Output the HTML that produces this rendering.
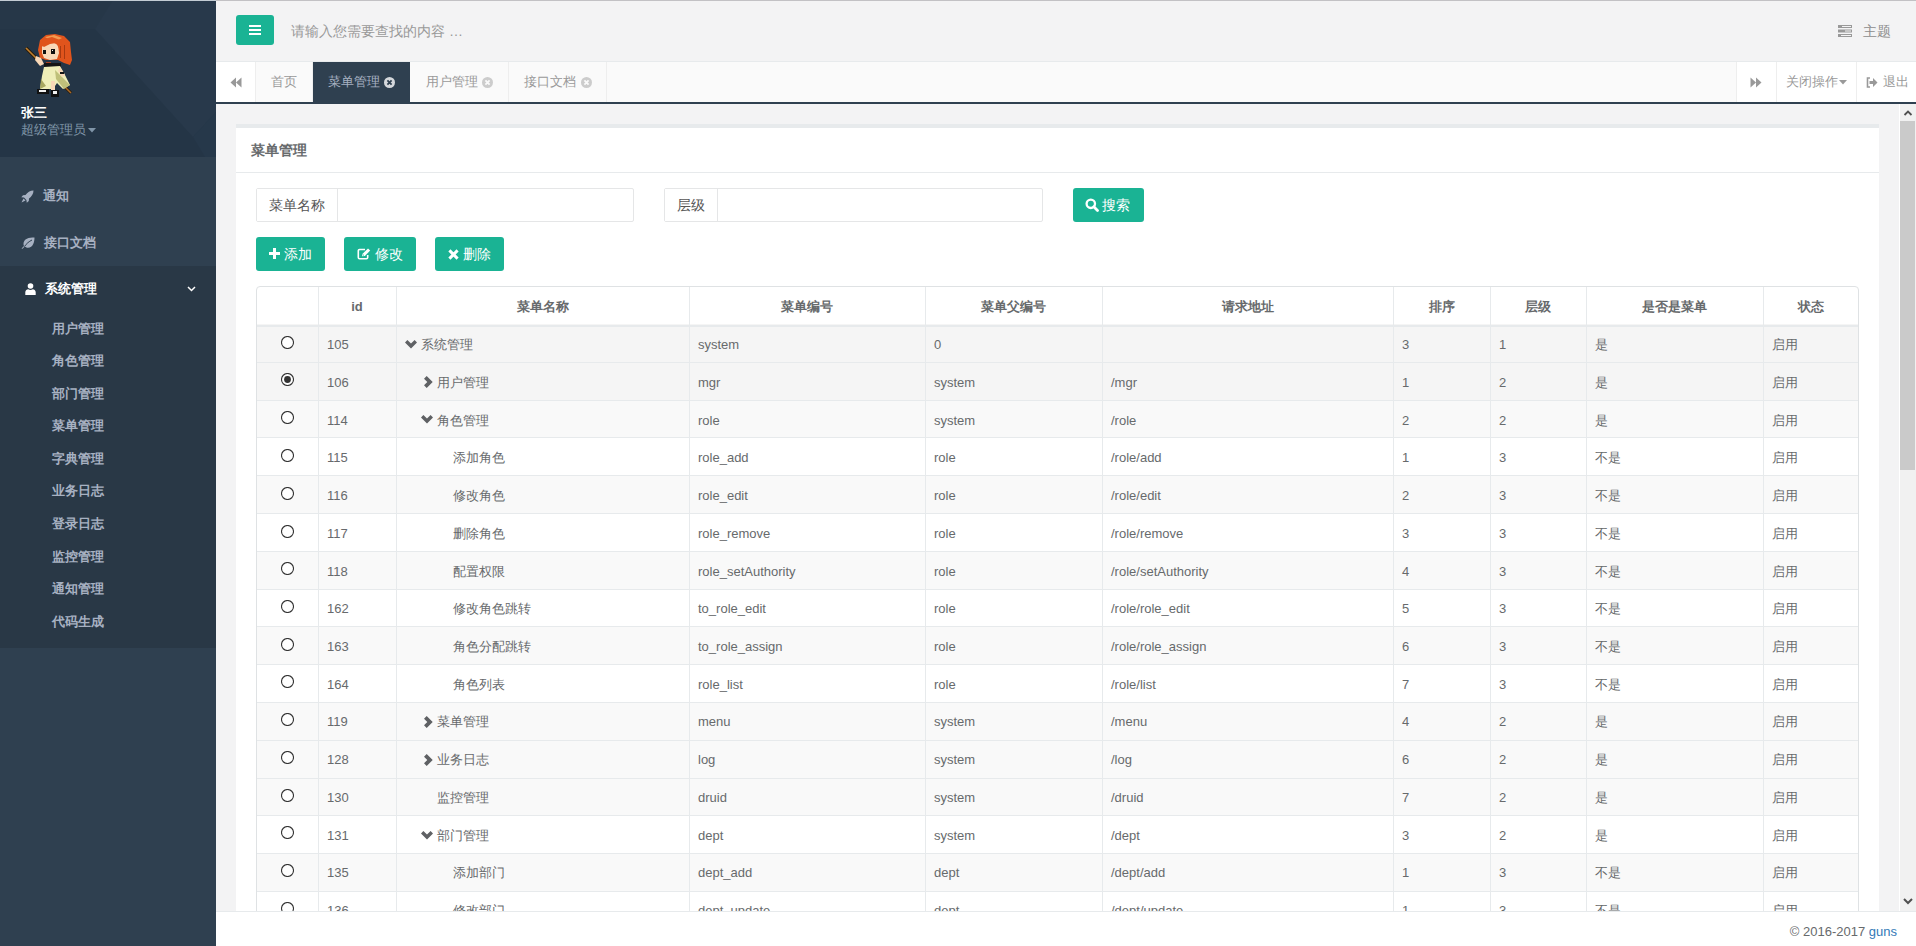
<!DOCTYPE html>
<html><head><meta charset="utf-8">
<style>
html,body{margin:0;padding:0;}
body{width:1916px;height:946px;overflow:hidden;position:relative;background:#f3f3f4;font-family:"Liberation Sans",sans-serif;font-size:13px;color:#676a6c;}
.abs{position:absolute;}
.ic{position:absolute;display:block;}
/* sidebar */
#side{position:absolute;left:0;top:0;width:216px;height:946px;background:#2f4050;overflow:hidden;}
#prof{position:absolute;left:0;top:0;width:216px;height:157px;background:#253444;overflow:hidden;}
.nm{position:absolute;left:21px;white-space:nowrap;line-height:18px;}
.nav1{position:absolute;left:0;width:216px;height:46.57px;line-height:46.57px;color:#a7b1c2;font-weight:bold;white-space:nowrap;}
.nav1 span{position:absolute;left:43px;top:0;}
#act{position:absolute;left:0;top:266px;width:216px;height:382px;background:#293846;}
.sub{position:absolute;left:52px;height:32.57px;line-height:32.57px;color:#a7b1c2;font-weight:bold;white-space:nowrap;}
/* header */
#topline{position:absolute;left:0;top:0;width:1916px;height:1px;background:#c2c1c4;}
#hdr{position:absolute;left:216px;top:1px;width:1700px;height:60px;background:#f3f3f4;}
#tabs{position:absolute;left:216px;top:61px;width:1700px;height:40px;background:#fafafa;border-top:1px solid #e7eaec;border-bottom:2px solid #2f4050;}
.tab{position:absolute;top:0;height:40px;line-height:40px;color:#999;white-space:nowrap;border-right:1px solid #eee;box-sizing:border-box;}
.rn{position:absolute;top:0;height:40px;background:#fff;box-sizing:border-box;}
/* content */
#ibox{position:absolute;left:236px;top:124px;width:1643px;height:800px;background:#fff;border-top:4px solid #e7eaec;box-sizing:border-box;}
.ig{position:absolute;top:188px;height:34px;box-sizing:border-box;border:1px solid #e5e6e7;border-radius:2px;background:#fff;}
.ig .ad{position:absolute;left:0;top:0;height:32px;line-height:32px;border-right:1px solid #e5e6e7;text-align:center;font-size:14px;color:#555;background:#fff;}
.btn{position:absolute;height:34px;line-height:34px;background:#1ab394;border-radius:3px;color:#fff;font-size:14px;white-space:nowrap;box-sizing:border-box;}
.tbl{position:absolute;border:1px solid #dfe2e4;border-radius:4px;background:#fff;}
.th{position:absolute;height:38px;line-height:40px;text-align:center;font-weight:bold;color:#676a6c;white-space:nowrap;}
.tr{position:absolute;left:257px;width:1601px;}
.td{position:absolute;height:36.74px;line-height:36.74px;white-space:nowrap;color:#676a6c;}
.vl{position:absolute;width:1px;background:#e7eaec;}
.hl{position:absolute;left:257px;width:1601px;height:1px;background:#e7eaec;}
.hl2{position:absolute;left:257px;width:1601px;height:2px;background:#e7eaec;}
.radio{position:absolute;left:281px;width:11px;height:11px;border:1px solid #333;border-radius:50%;background:#fff;}
.radio.on::after{content:"";position:absolute;left:2.5px;top:2.5px;width:6px;height:6px;border-radius:50%;background:#333;}
#footer{position:absolute;left:216px;top:911px;width:1700px;height:35px;background:#fff;border-top:1px solid #e7eaec;box-sizing:border-box;}
#sb{position:absolute;left:1899px;top:104px;width:17px;height:807px;background:#f1f1f1;border-left:1px solid #fff;box-sizing:border-box;}
#thumb{position:absolute;left:0;top:17px;width:15px;height:349px;background:#cacaca;}
</style></head><body>

<!-- content area -->
<div id="ibox">
  <div class="abs" style="left:15px;top:13px;font-weight:bold;font-size:14px;color:#676a6c;line-height:18px;">菜单管理</div>
  <div class="abs" style="left:0;top:44px;width:1643px;height:1px;background:#e7eaec;"></div>
</div>

<div class="ig" style="left:256px;width:378px;">
  <div class="ad" style="width:80px;">菜单名称</div>
</div>
<div class="ig" style="left:664px;width:379px;">
  <div class="ad" style="width:52px;">层级</div>
</div>
<div class="btn" style="left:1073px;top:188px;width:71px;">
  <svg class="ic" style="left:12px;top:10px" width="14" height="14" viewBox="0 0 14 14"><circle cx="5.8" cy="5.8" r="4.2" fill="none" stroke="#fff" stroke-width="2.3"/><path d="M8.8 8.8 L12.5 12.5" stroke="#fff" stroke-width="2.8" stroke-linecap="round"/></svg>
  <span class="abs" style="left:29px;top:0;">搜索</span>
</div>
<div class="btn" style="left:256px;top:237px;width:69px;">
  <svg class="ic" style="left:13px;top:11px" width="11" height="11" viewBox="0 0 11 11"><path d="M5.5 0V11M0 5.5H11" stroke="#fff" stroke-width="3"/></svg>
  <span class="abs" style="left:28px;top:0;">添加</span>
</div>
<div class="btn" style="left:344px;top:237px;width:72px;">
  <svg class="ic" style="left:13px;top:11px" width="14" height="12" viewBox="0 0 14 12"><path d="M8 1.5H2.5a1.2 1.2 0 0 0-1.2 1.2v6.8a1.2 1.2 0 0 0 1.2 1.2h7a1.2 1.2 0 0 0 1.2-1.2V7" fill="none" stroke="#fff" stroke-width="1.6"/><path d="M5 8.2L5.6 5.8 11 0.4 13.2 2.6 7.8 8z" fill="#fff"/><path d="M6 7.2l1 -0.2" stroke="#1ab394" stroke-width="0.8"/></svg>
  <span class="abs" style="left:31px;top:0;">修改</span>
</div>
<div class="btn" style="left:435px;top:237px;width:69px;">
  <svg class="ic" style="left:13px;top:12px" width="11" height="11" viewBox="0 0 11 11"><path d="M1.4 1.4L9.6 9.6M9.6 1.4L1.4 9.6" stroke="#fff" stroke-width="3"/></svg>
  <span class="abs" style="left:28px;top:0;">删除</span>
</div>

<div class="tbl" style="left:256px;top:286px;width:1601px;height:635px"></div>
<div class="th" style="left:318px;width:78px;top:287px">id</div>
<div class="th" style="left:396px;width:293px;top:287px">菜单名称</div>
<div class="th" style="left:689px;width:236px;top:287px">菜单编号</div>
<div class="th" style="left:925px;width:177px;top:287px">菜单父编号</div>
<div class="th" style="left:1102px;width:291px;top:287px">请求地址</div>
<div class="th" style="left:1393px;width:97px;top:287px">排序</div>
<div class="th" style="left:1490px;width:96px;top:287px">层级</div>
<div class="th" style="left:1586px;width:177px;top:287px">是否是菜单</div>
<div class="th" style="left:1763px;width:95px;top:287px">状态</div>
<div class="tr" style="top:324.10px;height:37.79px;background:#f5f5f5"></div>
<svg class="ic" style="left:281px;top:336px" width="13" height="13" viewBox="0 0 13 13"><circle cx="6.5" cy="6.5" r="6" fill="#fff" stroke="#333" stroke-width="1.1"/></svg>
<div class="td" style="left:327px;top:327.30px">105</div>
<svg class="ic" style="left:404.8px;top:339.5px" width="12" height="9" viewBox="0 0 12 9"><path d="M0 2.4 L2.4 0 L6 3.6 L9.6 0 L12 2.4 L6 8.4z" fill="#5f6164"/></svg>
<div class="td" style="left:421px;top:327.30px">系统管理</div>
<div class="td" style="left:698px;top:327.30px">system</div>
<div class="td" style="left:934px;top:327.30px">0</div>
<div class="td" style="left:1111px;top:327.30px"></div>
<div class="td" style="left:1402px;top:327.30px">3</div>
<div class="td" style="left:1499px;top:327.30px">1</div>
<div class="td" style="left:1595px;top:327.30px">是</div>
<div class="td" style="left:1772px;top:327.30px">启用</div>
<div class="tr" style="top:361.89px;height:37.79px;background:#f5f5f5"></div>
<svg class="ic" style="left:281px;top:373px" width="13" height="13" viewBox="0 0 13 13"><circle cx="6.5" cy="6.5" r="6" fill="#fff" stroke="#333" stroke-width="1.1"/><circle cx="6.5" cy="6.5" r="3.4" fill="#333"/></svg>
<div class="td" style="left:327px;top:365.01px">106</div>
<svg class="ic" style="left:424px;top:375.68600000000004px" width="9" height="12" viewBox="0 0 9 12"><path d="M2.7 0 L0 2.7 L3.3 6 L0 9.3 L2.7 12 L8.7 6z" fill="#5f6164"/></svg>
<div class="td" style="left:437px;top:365.01px">用户管理</div>
<div class="td" style="left:698px;top:365.01px">mgr</div>
<div class="td" style="left:934px;top:365.01px">system</div>
<div class="td" style="left:1111px;top:365.01px">/mgr</div>
<div class="td" style="left:1402px;top:365.01px">1</div>
<div class="td" style="left:1499px;top:365.01px">2</div>
<div class="td" style="left:1595px;top:365.01px">是</div>
<div class="td" style="left:1772px;top:365.01px">启用</div>
<div class="tr" style="top:399.67px;height:37.79px;background:#f9f9f9"></div>
<svg class="ic" style="left:281px;top:411px" width="13" height="13" viewBox="0 0 13 13"><circle cx="6.5" cy="6.5" r="6" fill="#fff" stroke="#333" stroke-width="1.1"/></svg>
<div class="td" style="left:327px;top:402.72px">114</div>
<svg class="ic" style="left:420.8px;top:415.072px" width="12" height="9" viewBox="0 0 12 9"><path d="M0 2.4 L2.4 0 L6 3.6 L9.6 0 L12 2.4 L6 8.4z" fill="#5f6164"/></svg>
<div class="td" style="left:437px;top:402.72px">角色管理</div>
<div class="td" style="left:698px;top:402.72px">role</div>
<div class="td" style="left:934px;top:402.72px">system</div>
<div class="td" style="left:1111px;top:402.72px">/role</div>
<div class="td" style="left:1402px;top:402.72px">2</div>
<div class="td" style="left:1499px;top:402.72px">2</div>
<div class="td" style="left:1595px;top:402.72px">是</div>
<div class="td" style="left:1772px;top:402.72px">启用</div>
<div class="tr" style="top:437.46px;height:37.79px;background:#fff"></div>
<svg class="ic" style="left:281px;top:449px" width="13" height="13" viewBox="0 0 13 13"><circle cx="6.5" cy="6.5" r="6" fill="#fff" stroke="#333" stroke-width="1.1"/></svg>
<div class="td" style="left:327px;top:440.43px">115</div>
<div class="td" style="left:453px;top:440.43px">添加角色</div>
<div class="td" style="left:698px;top:440.43px">role_add</div>
<div class="td" style="left:934px;top:440.43px">role</div>
<div class="td" style="left:1111px;top:440.43px">/role/add</div>
<div class="td" style="left:1402px;top:440.43px">1</div>
<div class="td" style="left:1499px;top:440.43px">3</div>
<div class="td" style="left:1595px;top:440.43px">不是</div>
<div class="td" style="left:1772px;top:440.43px">启用</div>
<div class="tr" style="top:475.24px;height:37.79px;background:#f9f9f9"></div>
<svg class="ic" style="left:281px;top:487px" width="13" height="13" viewBox="0 0 13 13"><circle cx="6.5" cy="6.5" r="6" fill="#fff" stroke="#333" stroke-width="1.1"/></svg>
<div class="td" style="left:327px;top:478.14px">116</div>
<div class="td" style="left:453px;top:478.14px">修改角色</div>
<div class="td" style="left:698px;top:478.14px">role_edit</div>
<div class="td" style="left:934px;top:478.14px">role</div>
<div class="td" style="left:1111px;top:478.14px">/role/edit</div>
<div class="td" style="left:1402px;top:478.14px">2</div>
<div class="td" style="left:1499px;top:478.14px">3</div>
<div class="td" style="left:1595px;top:478.14px">不是</div>
<div class="td" style="left:1772px;top:478.14px">启用</div>
<div class="tr" style="top:513.03px;height:37.79px;background:#fff"></div>
<svg class="ic" style="left:281px;top:525px" width="13" height="13" viewBox="0 0 13 13"><circle cx="6.5" cy="6.5" r="6" fill="#fff" stroke="#333" stroke-width="1.1"/></svg>
<div class="td" style="left:327px;top:515.85px">117</div>
<div class="td" style="left:453px;top:515.85px">删除角色</div>
<div class="td" style="left:698px;top:515.85px">role_remove</div>
<div class="td" style="left:934px;top:515.85px">role</div>
<div class="td" style="left:1111px;top:515.85px">/role/remove</div>
<div class="td" style="left:1402px;top:515.85px">3</div>
<div class="td" style="left:1499px;top:515.85px">3</div>
<div class="td" style="left:1595px;top:515.85px">不是</div>
<div class="td" style="left:1772px;top:515.85px">启用</div>
<div class="tr" style="top:550.82px;height:37.79px;background:#f9f9f9"></div>
<svg class="ic" style="left:281px;top:562px" width="13" height="13" viewBox="0 0 13 13"><circle cx="6.5" cy="6.5" r="6" fill="#fff" stroke="#333" stroke-width="1.1"/></svg>
<div class="td" style="left:327px;top:553.56px">118</div>
<div class="td" style="left:453px;top:553.56px">配置权限</div>
<div class="td" style="left:698px;top:553.56px">role_setAuthority</div>
<div class="td" style="left:934px;top:553.56px">role</div>
<div class="td" style="left:1111px;top:553.56px">/role/setAuthority</div>
<div class="td" style="left:1402px;top:553.56px">4</div>
<div class="td" style="left:1499px;top:553.56px">3</div>
<div class="td" style="left:1595px;top:553.56px">不是</div>
<div class="td" style="left:1772px;top:553.56px">启用</div>
<div class="tr" style="top:588.60px;height:37.79px;background:#fff"></div>
<svg class="ic" style="left:281px;top:600px" width="13" height="13" viewBox="0 0 13 13"><circle cx="6.5" cy="6.5" r="6" fill="#fff" stroke="#333" stroke-width="1.1"/></svg>
<div class="td" style="left:327px;top:591.27px">162</div>
<div class="td" style="left:453px;top:591.27px">修改角色跳转</div>
<div class="td" style="left:698px;top:591.27px">to_role_edit</div>
<div class="td" style="left:934px;top:591.27px">role</div>
<div class="td" style="left:1111px;top:591.27px">/role/role_edit</div>
<div class="td" style="left:1402px;top:591.27px">5</div>
<div class="td" style="left:1499px;top:591.27px">3</div>
<div class="td" style="left:1595px;top:591.27px">不是</div>
<div class="td" style="left:1772px;top:591.27px">启用</div>
<div class="tr" style="top:626.39px;height:37.79px;background:#f9f9f9"></div>
<svg class="ic" style="left:281px;top:638px" width="13" height="13" viewBox="0 0 13 13"><circle cx="6.5" cy="6.5" r="6" fill="#fff" stroke="#333" stroke-width="1.1"/></svg>
<div class="td" style="left:327px;top:628.98px">163</div>
<div class="td" style="left:453px;top:628.98px">角色分配跳转</div>
<div class="td" style="left:698px;top:628.98px">to_role_assign</div>
<div class="td" style="left:934px;top:628.98px">role</div>
<div class="td" style="left:1111px;top:628.98px">/role/role_assign</div>
<div class="td" style="left:1402px;top:628.98px">6</div>
<div class="td" style="left:1499px;top:628.98px">3</div>
<div class="td" style="left:1595px;top:628.98px">不是</div>
<div class="td" style="left:1772px;top:628.98px">启用</div>
<div class="tr" style="top:664.17px;height:37.79px;background:#fff"></div>
<svg class="ic" style="left:281px;top:675px" width="13" height="13" viewBox="0 0 13 13"><circle cx="6.5" cy="6.5" r="6" fill="#fff" stroke="#333" stroke-width="1.1"/></svg>
<div class="td" style="left:327px;top:666.69px">164</div>
<div class="td" style="left:453px;top:666.69px">角色列表</div>
<div class="td" style="left:698px;top:666.69px">role_list</div>
<div class="td" style="left:934px;top:666.69px">role</div>
<div class="td" style="left:1111px;top:666.69px">/role/list</div>
<div class="td" style="left:1402px;top:666.69px">7</div>
<div class="td" style="left:1499px;top:666.69px">3</div>
<div class="td" style="left:1595px;top:666.69px">不是</div>
<div class="td" style="left:1772px;top:666.69px">启用</div>
<div class="tr" style="top:701.96px;height:37.79px;background:#f9f9f9"></div>
<svg class="ic" style="left:281px;top:713px" width="13" height="13" viewBox="0 0 13 13"><circle cx="6.5" cy="6.5" r="6" fill="#fff" stroke="#333" stroke-width="1.1"/></svg>
<div class="td" style="left:327px;top:704.40px">119</div>
<svg class="ic" style="left:424px;top:715.76px" width="9" height="12" viewBox="0 0 9 12"><path d="M2.7 0 L0 2.7 L3.3 6 L0 9.3 L2.7 12 L8.7 6z" fill="#5f6164"/></svg>
<div class="td" style="left:437px;top:704.40px">菜单管理</div>
<div class="td" style="left:698px;top:704.40px">menu</div>
<div class="td" style="left:934px;top:704.40px">system</div>
<div class="td" style="left:1111px;top:704.40px">/menu</div>
<div class="td" style="left:1402px;top:704.40px">4</div>
<div class="td" style="left:1499px;top:704.40px">2</div>
<div class="td" style="left:1595px;top:704.40px">是</div>
<div class="td" style="left:1772px;top:704.40px">启用</div>
<div class="tr" style="top:739.75px;height:37.79px;background:#f9f9f9"></div>
<svg class="ic" style="left:281px;top:751px" width="13" height="13" viewBox="0 0 13 13"><circle cx="6.5" cy="6.5" r="6" fill="#fff" stroke="#333" stroke-width="1.1"/></svg>
<div class="td" style="left:327px;top:742.11px">128</div>
<svg class="ic" style="left:424px;top:753.546px" width="9" height="12" viewBox="0 0 9 12"><path d="M2.7 0 L0 2.7 L3.3 6 L0 9.3 L2.7 12 L8.7 6z" fill="#5f6164"/></svg>
<div class="td" style="left:437px;top:742.11px">业务日志</div>
<div class="td" style="left:698px;top:742.11px">log</div>
<div class="td" style="left:934px;top:742.11px">system</div>
<div class="td" style="left:1111px;top:742.11px">/log</div>
<div class="td" style="left:1402px;top:742.11px">6</div>
<div class="td" style="left:1499px;top:742.11px">2</div>
<div class="td" style="left:1595px;top:742.11px">是</div>
<div class="td" style="left:1772px;top:742.11px">启用</div>
<div class="tr" style="top:777.53px;height:37.79px;background:#f9f9f9"></div>
<svg class="ic" style="left:281px;top:789px" width="13" height="13" viewBox="0 0 13 13"><circle cx="6.5" cy="6.5" r="6" fill="#fff" stroke="#333" stroke-width="1.1"/></svg>
<div class="td" style="left:327px;top:779.82px">130</div>
<div class="td" style="left:437px;top:779.82px">监控管理</div>
<div class="td" style="left:698px;top:779.82px">druid</div>
<div class="td" style="left:934px;top:779.82px">system</div>
<div class="td" style="left:1111px;top:779.82px">/druid</div>
<div class="td" style="left:1402px;top:779.82px">7</div>
<div class="td" style="left:1499px;top:779.82px">2</div>
<div class="td" style="left:1595px;top:779.82px">是</div>
<div class="td" style="left:1772px;top:779.82px">启用</div>
<div class="tr" style="top:815.32px;height:37.79px;background:#fff"></div>
<svg class="ic" style="left:281px;top:826px" width="13" height="13" viewBox="0 0 13 13"><circle cx="6.5" cy="6.5" r="6" fill="#fff" stroke="#333" stroke-width="1.1"/></svg>
<div class="td" style="left:327px;top:817.53px">131</div>
<svg class="ic" style="left:420.8px;top:830.718px" width="12" height="9" viewBox="0 0 12 9"><path d="M0 2.4 L2.4 0 L6 3.6 L9.6 0 L12 2.4 L6 8.4z" fill="#5f6164"/></svg>
<div class="td" style="left:437px;top:817.53px">部门管理</div>
<div class="td" style="left:698px;top:817.53px">dept</div>
<div class="td" style="left:934px;top:817.53px">system</div>
<div class="td" style="left:1111px;top:817.53px">/dept</div>
<div class="td" style="left:1402px;top:817.53px">3</div>
<div class="td" style="left:1499px;top:817.53px">2</div>
<div class="td" style="left:1595px;top:817.53px">是</div>
<div class="td" style="left:1772px;top:817.53px">启用</div>
<div class="tr" style="top:853.10px;height:37.79px;background:#f9f9f9"></div>
<svg class="ic" style="left:281px;top:864px" width="13" height="13" viewBox="0 0 13 13"><circle cx="6.5" cy="6.5" r="6" fill="#fff" stroke="#333" stroke-width="1.1"/></svg>
<div class="td" style="left:327px;top:855.24px">135</div>
<div class="td" style="left:453px;top:855.24px">添加部门</div>
<div class="td" style="left:698px;top:855.24px">dept_add</div>
<div class="td" style="left:934px;top:855.24px">dept</div>
<div class="td" style="left:1111px;top:855.24px">/dept/add</div>
<div class="td" style="left:1402px;top:855.24px">1</div>
<div class="td" style="left:1499px;top:855.24px">3</div>
<div class="td" style="left:1595px;top:855.24px">不是</div>
<div class="td" style="left:1772px;top:855.24px">启用</div>
<div class="tr" style="top:890.89px;height:37.79px;background:#fff"></div>
<svg class="ic" style="left:281px;top:902px" width="13" height="13" viewBox="0 0 13 13"><circle cx="6.5" cy="6.5" r="6" fill="#fff" stroke="#333" stroke-width="1.1"/></svg>
<div class="td" style="left:327px;top:892.95px">136</div>
<div class="td" style="left:453px;top:892.95px">修改部门</div>
<div class="td" style="left:698px;top:892.95px">dept_update</div>
<div class="td" style="left:934px;top:892.95px">dept</div>
<div class="td" style="left:1111px;top:892.95px">/dept/update</div>
<div class="td" style="left:1402px;top:892.95px">1</div>
<div class="td" style="left:1499px;top:892.95px">3</div>
<div class="td" style="left:1595px;top:892.95px">不是</div>
<div class="td" style="left:1772px;top:892.95px">启用</div>
<div class="vl" style="left:318px;top:287px;height:625px"></div>
<div class="vl" style="left:396px;top:287px;height:625px"></div>
<div class="vl" style="left:689px;top:287px;height:625px"></div>
<div class="vl" style="left:925px;top:287px;height:625px"></div>
<div class="vl" style="left:1102px;top:287px;height:625px"></div>
<div class="vl" style="left:1393px;top:287px;height:625px"></div>
<div class="vl" style="left:1490px;top:287px;height:625px"></div>
<div class="vl" style="left:1586px;top:287px;height:625px"></div>
<div class="vl" style="left:1763px;top:287px;height:625px"></div>
<div class="hl2" style="top:325.4px"></div>
<div class="hl" style="top:361.89px"></div>
<div class="hl" style="top:399.67px"></div>
<div class="hl" style="top:437.46px"></div>
<div class="hl" style="top:475.24px"></div>
<div class="hl" style="top:513.03px"></div>
<div class="hl" style="top:550.82px"></div>
<div class="hl" style="top:588.60px"></div>
<div class="hl" style="top:626.39px"></div>
<div class="hl" style="top:664.17px"></div>
<div class="hl" style="top:701.96px"></div>
<div class="hl" style="top:739.75px"></div>
<div class="hl" style="top:777.53px"></div>
<div class="hl" style="top:815.32px"></div>
<div class="hl" style="top:853.10px"></div>
<div class="hl" style="top:890.89px"></div>

<div id="sb">
  <svg class="ic" style="left:3px;top:5px" width="10" height="8" viewBox="0 0 10 8"><path d="M1.5 6L5 2.5 8.5 6" fill="none" stroke="#505050" stroke-width="1.8"/></svg>
  <div id="thumb"></div>
  <svg class="ic" style="left:3px;top:793px" width="10" height="8" viewBox="0 0 10 8"><path d="M1 2L5 6 9 2" fill="none" stroke="#505050" stroke-width="2"/></svg>
</div>

<div id="footer">
  <div class="abs" style="right:19px;top:0;line-height:39px;white-space:nowrap;color:#676a6c;">© 2016-2017 <span style="color:#337ab7">guns</span></div>
</div>

<!-- header -->
<div id="hdr">
  <div class="abs" style="left:20px;top:14px;width:38px;height:30px;background:#1ab394;border-radius:3px;">
    <svg class="ic" style="left:13px;top:10px" width="12" height="10" viewBox="0 0 12 10"><rect x="0" y="0" width="12" height="2" fill="#fff"/><rect x="0" y="4" width="12" height="2" fill="#fff"/><rect x="0" y="8" width="12" height="2" fill="#fff"/></svg>
  </div>
  <div class="abs" style="left:75px;top:20px;line-height:20px;font-size:14px;color:#999;white-space:nowrap;">请输入您需要查找的内容 …</div>
  <svg class="ic" style="left:1622px;top:24px" width="14" height="12" viewBox="0 0 14 12"><rect x="0" y="0" width="14" height="3" fill="#999"/><rect x="0" y="4.5" width="14" height="3" fill="#999"/><rect x="0" y="9" width="14" height="3" fill="#999"/><rect x="4" y="1" width="9" height="1" fill="#f3f3f4"/><rect x="7" y="5.5" width="6" height="1" fill="#f3f3f4"/><rect x="3" y="10" width="10" height="1" fill="#f3f3f4"/></svg>
  <div class="abs" style="left:1647px;top:20.3px;line-height:20px;font-size:14px;color:#8c8c8c;white-space:nowrap;">主题</div>
</div>

<div id="tabs">
  <div class="rn" style="left:0;width:40px;border-right:1px solid #eee;">
    <svg class="ic" style="left:14px;top:15px" width="12" height="11" viewBox="0 0 12 11"><path d="M6 0.5V10.5L0.5 5.5z M11.5 0.5V10.5L6 5.5z" fill="#999"/></svg>
  </div>
  <div class="tab" style="left:40px;width:57px;padding-left:15px;">首页</div>
  <div class="tab" style="left:97px;width:97px;padding-left:15px;background:#2f4050;color:#a7b1c2;height:42px;border-right:none;">菜单管理<svg class="ic" style="left:71px;top:15px" width="11" height="11" viewBox="0 0 11 11"><circle cx="5.5" cy="5.5" r="5.5" fill="#d5d8dc"/><path d="M3.4 3.4L7.6 7.6M7.6 3.4L3.4 7.6" stroke="#2f4050" stroke-width="1.8"/></svg></div>
  <div class="tab" style="left:194px;width:99px;padding-left:16px;">用户管理<svg class="ic" style="left:72px;top:15px" width="11" height="11" viewBox="0 0 11 11"><circle cx="5.5" cy="5.5" r="5.5" fill="#ccc"/><path d="M3.4 3.4L7.6 7.6M7.6 3.4L3.4 7.6" stroke="#fafafa" stroke-width="1.8"/></svg></div>
  <div class="tab" style="left:293px;width:98px;padding-left:15px;">接口文档<svg class="ic" style="left:72px;top:15px" width="11" height="11" viewBox="0 0 11 11"><circle cx="5.5" cy="5.5" r="5.5" fill="#ccc"/><path d="M3.4 3.4L7.6 7.6M7.6 3.4L3.4 7.6" stroke="#fafafa" stroke-width="1.8"/></svg></div>
  <div class="rn" style="left:1520px;width:40px;border-left:1px solid #eee;">
    <svg class="ic" style="left:13px;top:15px" width="12" height="11" viewBox="0 0 12 11"><path d="M0.5 0.5V10.5L6 5.5z M6 0.5V10.5L11.5 5.5z" fill="#999"/></svg>
  </div>
  <div class="rn" style="left:1560px;width:80px;border-left:1px solid #eee;color:#999;line-height:40px;white-space:nowrap;">
    <span class="abs" style="left:9px;top:0;">关闭操作</span>
    <svg class="ic" style="left:62px;top:18px" width="8" height="5" viewBox="0 0 8 5"><path d="M0 0H8L4 4.5z" fill="#999"/></svg>
  </div>
  <div class="rn" style="left:1640px;width:60px;border-left:1px solid #eee;color:#999;line-height:40px;white-space:nowrap;">
    <svg class="ic" style="left:9px;top:15px" width="12" height="11" viewBox="0 0 12 11"><path d="M4 1H1.5V10H4" fill="none" stroke="#999" stroke-width="1.6"/><path d="M3.5 4H7V1L11.5 5.5 7 10V7H3.5z" fill="#999"/></svg>
    <span class="abs" style="left:26px;top:0;">退出</span>
  </div>
</div>

<!-- sidebar -->
<div id="side">
  <div id="prof">
    <svg class="ic" style="left:0;top:0" width="216" height="157" viewBox="0 0 216 157">
      <rect x="0" y="0" width="216" height="157" fill="#243546"/>
      <polygon points="0,0 216,0 216,112 193,137 95,29 0,29" fill="#28394b"/>
      <polygon points="0,0 113,0 95,29 0,29" fill="#263748"/>
      <polygon points="193,137 216,112 216,157 205,157" fill="#26384a"/>
    </svg>
    <svg class="ic" style="left:0;top:0" width="100" height="110" viewBox="0 0 100 110">
      <path d="M26 48 L41 63" stroke="#2a1a08" stroke-width="3.2"/>
      <path d="M26 48 L41 63" stroke="#c08030" stroke-width="1.6"/>
      <path d="M60 82 L71 93" stroke="#2a1a08" stroke-width="3"/>
      <path d="M60 82 L71 93" stroke="#a86a28" stroke-width="1.5"/>
      <polygon points="38,50 40,40 46,35 55,34 64,36 70,42 71,52 72,60 70,65 64,63 58,60 46,60 40,58" fill="#e0541c"/>
      <polygon points="45,37 54,35 62,38 58,40 50,40" fill="#f39a50"/>
      <polygon points="42,47 44,44 52,42 58,45 59,53 57,59 50,60 44,58 42,53" fill="#f8d8b8"/>
      <polygon points="41,45 44,39 52,37 60,40 63,47 60,50 56,43 50,44 44,47" fill="#e0541c"/>
      <rect x="60" y="46" width="1" height="12" fill="#a83a10"/>
      <rect x="64" y="45" width="1" height="14" fill="#a83a10"/>
      <rect x="43" y="50" width="3" height="4" fill="#111"/>
      <rect x="51" y="49" width="4" height="5" fill="#111"/>
      <rect x="52" y="50" width="1" height="1" fill="#fff"/>
      <rect x="46" y="62" width="5" height="2" fill="#a84020"/>
      <polygon points="36,56 41,58 44,64 40,66 35,60" fill="#f8d8b8"/>
      <rect x="44" y="63" width="17" height="5" fill="#141414"/>
      <polygon points="44,67 60,66 64,73 70,85 63,89 57,83 53,89 40,89 42,76" fill="#eeeeb8"/>
      <polygon points="55,70 70,85 64,89 56,79" fill="#bfc07a"/>
      <polygon points="41,79 46,86 40,89" fill="#a8a860"/>
      <rect x="51" y="81" width="4" height="9" fill="#f8d8b8"/>
      <polygon points="60,67 65,75 62,77 58,71" fill="#f8d8b8"/>
      <rect x="60" y="72" width="4" height="2" fill="#141414"/>
      <rect x="37" y="89" width="12" height="5" fill="#111"/>
      <rect x="39" y="90" width="7" height="2" fill="#f0f0f0"/>
      <rect x="51" y="90" width="8" height="7" fill="#111"/>
      <rect x="53" y="91" width="4" height="3" fill="#f0f0f0"/>
    </svg>
    <div class="nm" style="top:104px;color:#fff;font-weight:bold;">张三</div>
    <div class="nm" style="top:121px;color:#8095a8;">超级管理员<svg style="display:inline-block;vertical-align:middle;margin-left:2px" width="8" height="5" viewBox="0 0 8 5"><path d="M0 0H8L4 4.5z" fill="#8095a8"/></svg></div>
  </div>
  <div class="nav1" style="top:173px;">
    <svg class="ic" style="left:21px;top:17px" width="13" height="13" viewBox="0 0 13 13"><path d="M12.5 0.5C9 0.5 6.5 2.5 4.5 5L2 5.2 0.3 7.2 3 7.6 5.4 10 5.8 12.7 7.8 11 8 8.5C10.5 6.5 12.5 4 12.5 0.5z M2.5 8.5L0.5 12.5 4.5 10.5z" fill="#a7b1c2"/></svg>
    <span>通知</span>
  </div>
  <div class="nav1" style="top:219.5px;">
    <svg class="ic" style="left:21px;top:17px" width="14" height="12" viewBox="0 0 14 12"><path d="M13.5 0.5C8 0.5 2.5 1.5 2.5 7 2.5 8 3 9 3 9 L0.5 11.5 1.5 11.8 3.8 9.6C5 10.5 6 10.8 7 10.8 12 10.8 13.5 5 13.5 0.5z" fill="#a7b1c2"/><path d="M3.5 9.5C5.5 6.5 8 4.5 11 3" stroke="#2f4050" stroke-width="1" fill="none"/></svg>
    <span style="left:44px;">接口文档</span>
  </div>
  <div id="act">
    <div class="nav1" style="top:0;color:#fff;">
      <svg class="ic" style="left:25px;top:17px" width="11" height="12" viewBox="0 0 11 12"><circle cx="5.5" cy="3" r="2.8" fill="#fff"/><path d="M0.3 12V9.3C0.3 7.3 2 6.2 3.2 6.2 4 6.8 4.8 7 5.5 7 6.2 7 7 6.8 7.8 6.2 9 6.2 10.7 7.3 10.7 9.3V12z" fill="#fff"/></svg>
      <span style="left:45px;">系统管理</span>
      <svg class="ic" style="left:187px;top:20px" width="9" height="6" viewBox="0 0 9 6"><path d="M1 1L4.5 4.5 8 1" fill="none" stroke="#fff" stroke-width="1.5"/></svg>
    </div>
  </div>
  <div class="sub" style="top:312.57px">用户管理</div>
<div class="sub" style="top:345.14px">角色管理</div>
<div class="sub" style="top:377.71px">部门管理</div>
<div class="sub" style="top:410.28px">菜单管理</div>
<div class="sub" style="top:442.85px">字典管理</div>
<div class="sub" style="top:475.42px">业务日志</div>
<div class="sub" style="top:507.99px">登录日志</div>
<div class="sub" style="top:540.56px">监控管理</div>
<div class="sub" style="top:573.13px">通知管理</div>
<div class="sub" style="top:605.70px">代码生成</div>
</div>

<div id="topline"></div>
<div class="abs" style="left:0;top:0;width:216px;height:1px;background:#c3ccd4;"></div>
</body></html>
